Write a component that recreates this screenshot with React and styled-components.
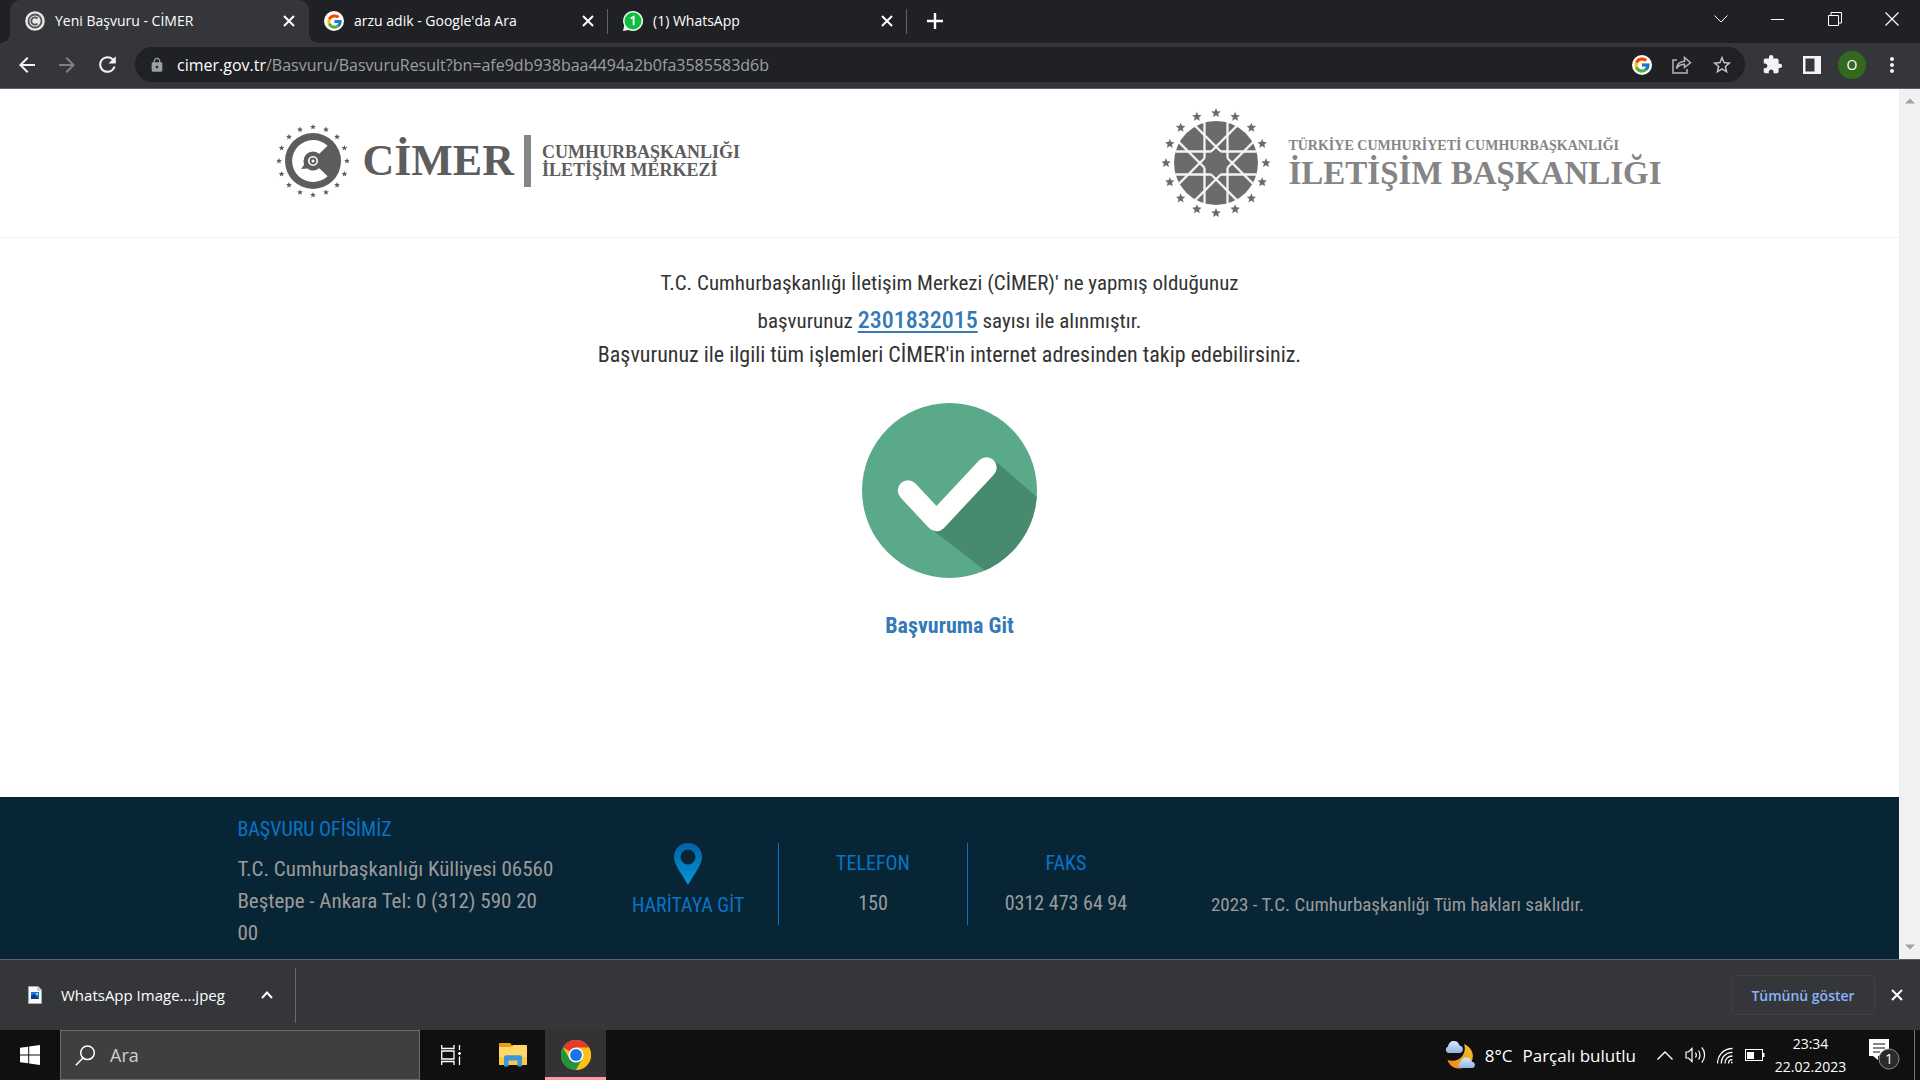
import React from 'react';
import styled, { createGlobalStyle, css } from 'styled-components';
import {
  MdArrowBack, MdArrowForward, MdRefresh, MdLock, MdStarBorder, MdExtension, MdMoreVert,
} from 'react-icons/md';
import { FcGoogle } from 'react-icons/fc';

const ui = '"Open Sans", "Noto Sans", sans-serif';
const condensed = '"Roboto Condensed", Roboto, sans-serif';
const serif = '"Liberation Serif", serif';

const GlobalStyle = createGlobalStyle`
  *, *::before, *::after { box-sizing: border-box; }
  body { margin: 0; background: #fff; font-family: ${ui}; }
  button, input { font: inherit; color: inherit; border: 0; margin: 0; padding: 0; background: none; }
  button { cursor: pointer; display: flex; align-items: center; justify-content: center; }
  a { text-decoration: none; }
  p, h2 { margin: 0; font-weight: 400; font-size: inherit; }
  svg { display: block; flex: none; }
`;

const Screen = styled.div`
  display: flex;
  flex-direction: column;
  min-height: 100vh;
`;

/* Browser chrome */
const TabStrip = styled.div`
  display: flex;
  height: 43px;
  padding-left: 10px;
  background: #202124;
  color: #fff;
`;

const Tab = styled.div`
  position: relative;
  display: flex;
  align-items: center;
  gap: 10px;
  width: 299px;
  padding: 0 10px 1px 15px;
  font-size: 14px;
  line-height: 20px;
  ${p => p.$active && css`
    background: #35363a;
    border-radius: 10px 10px 0 0;
    &::before, &::after {
      content: '';
      position: absolute;
      bottom: 0;
      width: 10px;
      height: 10px;
    }
    &::before { left: -10px; background: radial-gradient(circle at 0 0, transparent 10px, #35363a 10px); }
    &::after { right: -10px; background: radial-gradient(circle at 100% 0, transparent 10px, #35363a 10px); }
  `}
`;

const TabDivider = styled.span`
  position: absolute;
  right: 0;
  top: 9px;
  width: 1px;
  height: 25px;
  background: #5f6368;
`;

const TabTitle = styled.span`
  flex: 1;
  white-space: nowrap;
`;

const TabButton = styled.button`
  width: 20px;
  height: 20px;
`;

const NewTab = styled.button`
  width: 36px;
  height: 42px;
  margin-left: 10px;
`;

const WindowControls = styled.div`
  display: flex;
  margin-left: auto;
`;

const WindowButton = styled.button`
  width: 57px;
  height: 37px;
`;

const Toolbar = styled.div`
  display: flex;
  align-items: center;
  height: 46px;
  padding: 0 8px 2px 7px;
  background: #35363a;
  border-bottom: 1px solid #5f6064;
  color: #f1f3f4;
`;

const ToolButton = styled.button`
  width: 40px;
  height: 35px;
  color: ${p => p.$color || 'inherit'};
`;

const AddressBar = styled.div`
  display: flex;
  align-items: center;
  flex: 1;
  height: 35px;
  margin: 0 7px 0 8px;
  padding: 0 3px 0 14px;
  border-radius: 18px;
  background: #202124;
`;

const Url = styled.div`
  flex: 1;
  margin-left: 12px;
  color: #9aa0a6;
  font-size: 16px;
  line-height: 24px;
  white-space: nowrap;
  outline: 0;
`;

const Host = styled.span`
  color: #fff;
`;

const Avatar = styled.span`
  display: grid;
  place-items: center;
  width: 28px;
  height: 28px;
  border-radius: 50%;
  background: #33691e;
  color: #fff;
  font-size: 14px;
`;

const Favicon = styled.span`
  display: grid;
  place-items: center;
  width: 20px;
  height: 20px;
  border-radius: 50%;
  background: #fff;
`;

/* Page */
const Viewport = styled.div`
  display: flex;
  flex: 1;
`;

const Page = styled.div`
  display: flex;
  flex: 1;
  flex-direction: column;
  background: #fff;
  font-family: ${condensed};
`;

const Scrollbar = styled.div`
  display: flex;
  flex-direction: column;
  justify-content: space-between;
  align-items: center;
  width: 21px;
  padding: 9px 0;
  background: #f1f1f1;
`;

const Header = styled.header`
  display: flex;
  justify-content: center;
  height: 149px;
  border-bottom: 1px solid #f0f0f0;
`;

const HeaderInner = styled.div`
  display: flex;
  align-items: center;
  justify-content: space-between;
  width: 75%;
  padding-left: 40px;
`;

const Brand = styled.a`
  display: flex;
  align-items: center;
  font-family: ${serif};
  font-weight: 700;
  white-space: nowrap;
`;

const CimerBrand = styled(Brand)`
  padding-bottom: 4px;
  color: #5d5d5d;
`;

const CimerName = styled.span`
  margin: 0 10px 0 13px;
  font-size: 44px;
  line-height: 44px;
`;

const CimerBar = styled.span`
  width: 7px;
  height: 52px;
  margin-right: 11px;
  background: #858585;
`;

const CimerText = styled.span`
  font-size: 18px;
  line-height: 18px;
`;

const OfficeBrand = styled(Brand)`
  gap: 18px;
  color: #858585;
`;

const OfficeOver = styled.div`
  font-size: 14px;
  line-height: 19px;
`;

const OfficeName = styled.div`
  font-size: 33px;
  line-height: 36px;
`;

const Main = styled.main`
  display: flex;
  flex: 1;
  flex-direction: column;
  align-items: center;
  padding-top: 28px;
  color: #333;
  text-align: center;
`;

const Lead = styled.p`
  font-size: 21px;
  line-height: 34px;
`;

const Note = styled.p`
  margin-bottom: 33px;
  font-size: 22px;
  line-height: 30px;
`;

const RecordLink = styled.a`
  color: #337ab7;
  font-size: 24px;
  font-weight: 500;
  line-height: 40px;
  text-decoration: underline;
  text-decoration-thickness: 2px;
  text-underline-offset: 3px;
`;

const GoLink = styled.a`
  margin-top: 33px;
  color: #337ab7;
  font-size: 22px;
  font-weight: 700;
  line-height: 30px;
`;

const Footer = styled.footer`
  display: flex;
  justify-content: center;
  background: #082536;
  color: #9b9b9b;
  font-size: 21px;
  line-height: 32px;
`;

const FooterGrid = styled.div`
  display: grid;
  grid-template-columns: 361fr 181fr 189fr 196fr 498fr;
  width: 75%;
  padding: 16px 0 10px;
`;

const Address = styled.address`
  max-width: 322px;
  font-style: normal;
`;

const FooterTitle = styled.h2`
  margin-bottom: 8px;
  color: #0874c8;
  font-size: 20px;
`;

const FooterCell = styled.div`
  display: flex;
  flex-direction: column;
  align-items: center;
  height: 82px;
  margin-top: 30px;
  font-size: 20px;
  line-height: 40px;
  ${p => p.$line && css`border-right: 1px solid #0874c8;`}
`;

const MapLink = styled.a`
  display: flex;
  flex-direction: column;
  align-items: center;
  color: #0874c8;
`;

const CellLabel = styled.span`
  color: #0874c8;
`;

const Copyright = styled.p`
  margin-top: 72px;
  padding-left: 47px;
  font-size: 19px;
  line-height: 40px;
`;

/* Downloads */
const Downloads = styled.div`
  display: flex;
  align-items: center;
  height: 71px;
  padding: 0 13px 0 27px;
  background: #35363a;
  border-top: 1px solid #5f6064;
  color: #fff;
`;

const DownloadItem = styled.div`
  display: flex;
  align-items: center;
  width: 269px;
  height: 55px;
  border-right: 1px solid #67686c;
  font-size: 15px;
`;

const FileButton = styled.button`
  gap: 18px;
  white-space: nowrap;
`;

const MenuButton = styled.button`
  width: 28px;
  height: 28px;
  margin-left: auto;
  margin-right: 14px;
`;

const ShowAll = styled.button`
  width: 144px;
  height: 40px;
  margin: 0 12px 0 auto;
  border: 1px solid #3f4044;
  border-radius: 5px;
  color: #8ab4f8;
  font-size: 14px;
  font-weight: 600;
`;

/* Taskbar */
const Taskbar = styled.div`
  display: flex;
  height: 50px;
  background: #101010;
  color: #fff;
`;

const TaskButton = styled.button`
  width: ${p => p.$w || 61}px;
  border-bottom: ${p => (p.$open ? '3px solid #ff9aa5' : '0')};
  background: ${p => (p.$open ? '#333' : 'none')};
  padding-top: ${p => (p.$open ? 3 : 0)}px;
`;

const SearchBox = styled.label`
  display: flex;
  align-items: center;
  gap: 14px;
  width: 360px;
  padding-left: 14px;
  border: 1px solid #6b6b6b;
  background: #3f3f3f;
`;

const SearchInput = styled.input`
  width: 280px;
  font-size: 18px;
  outline: 0;
  &::placeholder { color: #d0d0d0; opacity: 1; }
`;

const Tray = styled.div`
  display: flex;
  margin-left: auto;
`;

const Weather = styled.button`
  gap: 10px;
  margin-right: 14px;
  font-size: 17px;
  white-space: nowrap;
`;

const Clock = styled.button`
  flex-direction: column;
  width: 81px;
  font-size: 14px;
  line-height: 23px;
`;

const Notices = styled(TaskButton)`
  padding-left: 4px;
`;

const ShowDesktop = styled.button`
  width: 6px;
  border-left: 1px solid #777;
`;

const star = (cx, cy, r) =>
  Array.from({ length: 10 }, (_, i) => {
    const a = (i * Math.PI) / 5 - Math.PI / 2;
    const d = i % 2 ? r * 0.45 : r;
    return `${(cx + d * Math.cos(a)).toFixed(2)},${(cy + d * Math.sin(a)).toFixed(2)}`;
  }).join(' ');

const StarRing = ({ radius, size }) =>
  Array.from({ length: 16 }, (_, i) => {
    const a = (i * Math.PI) / 8;
    return <polygon key={i} points={star(radius * Math.sin(a), -radius * Math.cos(a), size)} />;
  });

const CimerEmblem = () => (
  <svg width="72" height="76" viewBox="-36 -38 72 76" fill="#5d5d5d" aria-hidden="true">
    <StarRing radius={34} size={3} />
    <circle r="28" />
    <path d="M14.6 -15.2A21 21 0 1 0 14.6 15.2L6 7L6 -7Z" fill="#fff" />
    <path d="M-9.5 0A9.5 9.5 0 1 1 0 9.5C-2.5 9.4 -4 8.6 -5.5 7.4L-12 8L-9 4Z" />
    <circle r="4.2" fill="none" stroke="#fff" strokeWidth="1.6" />
    <circle r="1.5" fill="#fff" />
  </svg>
);

const OfficeEmblem = () => (
  <svg width="108" height="112" viewBox="-54 -56 108 112" fill="#6b6b6b" aria-hidden="true">
    <StarRing radius={50} size={5} />
    <circle r="42" />
    <g stroke="#f4f4f4" strokeWidth="2.3">
      {[0, 45, 90, 135, 180, 225, 270, 315].map(a => (
        <path key={a} transform={`rotate(${a})`} d="M-11.5 -40.6V-4.7M-11.5 4.7V40.6" />
      ))}
    </g>
  </svg>
);

const CheckBadge = () => (
  <svg width="175" height="175" viewBox="0 0 175 175" role="img" aria-label="Başarılı">
    <clipPath id="disc"><circle cx="87.5" cy="87.5" r="87.5" /></clipPath>
    <circle cx="87.5" cy="87.5" r="87.5" fill="#5aaa8a" />
    <path clipPath="url(#disc)" fill="#478a6e" d="M132 57L190 107V190H152L68 125Z" />
    <path d="M46 87.500L74.500 118L124.500 64.500" fill="none" stroke="#fff" strokeWidth="20.500" strokeLinecap="round" strokeLinejoin="round" />
  </svg>
);

const MapPin = () => (
  <svg width="28" height="42" viewBox="0 0 28 42" aria-hidden="true">
    <linearGradient id="pin" x1="0" y1="0" x2="0" y2="1">
      <stop offset="0" stopColor="#0460a4" />
      <stop offset="1" stopColor="#0499d8" />
    </linearGradient>
    <path fillRule="evenodd" fill="url(#pin)" d="M14 0C6 0 0 6 0 14C0 22 8 31 14 42C20 31 28 22 28 14C28 6 22 0 14 0ZM14 6.500A7.500 7.500 0 1 1 14 21.500A7.500 7.500 0 0 1 14 6.500Z" />
  </svg>
);

const CimerFavicon = () => (
  <svg width="20" height="20" viewBox="-10 -10 20 20" fill="none" aria-hidden="true">
    <circle r="9.800" fill="#e8e8e8" />
    <circle r="6.500" stroke="#555" strokeWidth="1.800" />
    <path d="M2.500 -2.500A3.600 3.600 0 1 0 2.500 2.500" stroke="#555" strokeWidth="1.800" />
  </svg>
);

const WhatsAppFavicon = () => (
  <svg width="20" height="20" viewBox="0 0 20 20" aria-hidden="true">
    <path d="M10 0A10 10 0 1 1 5.500 18.900L0 20L1.200 14.700A10 10 0 0 1 10 0Z" fill="#e9f7ec" />
    <circle cx="10" cy="10" r="8.500" fill="#0fbe3f" />
    <path d="M7.800 7.500L10.600 5.800V14.200" fill="none" stroke="#fff" strokeWidth="1.800" />
  </svg>
);

const Line = ({ w = 20, h = 20, d, sw = 1.5, ...rest }) => (
  <svg width={w} height={h} viewBox={`0 0 ${w} ${h}`} fill="none" stroke="currentColor" strokeWidth={sw} aria-hidden="true" {...rest}>
    <path d={d} />
  </svg>
);

const CloseIcon = () => <Line w={12} h={12} sw={2} d="M1 1L11 11M11 1L1 11" />;

const PanelIcon = () => (
  <svg width="18" height="18" viewBox="0 0 18 18" aria-hidden="true">
    <path fillRule="evenodd" fill="#f1f3f4" d="M0 0H18V18H0ZM2.500 2.500V15.500H11.500V2.500Z" />
  </svg>
);

const FileIcon = () => (
  <svg width="16" height="18" viewBox="0 0 16 18" aria-hidden="true">
    <path d="M1.500 .5H11L14.500 4V17.500H1.500Z" fill="#f8f8f8" stroke="#a9a9a9" />
    <path d="M11 .5V4H14.500" fill="#ddd" stroke="#a9a9a9" />
    <path d="M4 6H12V13H4Z" fill="#1976d2" />
    <path d="M4 10L7 8L12 13H4Z" fill="#0d3b7d" />
    <circle cx="10" cy="8" r="1" fill="#bfe6ff" />
  </svg>
);

const WindowsLogo = () => (
  <svg width="20" height="20" viewBox="0 0 20 20" fill="#fff" aria-hidden="true">
    <path d="M0 2.800L8.200 1.700V9.500H0ZM9.200 1.500L20 0V9.500H9.200ZM0 10.500H8.200V18.300L0 17.200ZM9.200 10.500H20V20L9.200 18.500Z" />
  </svg>
);

const ExplorerIcon = () => (
  <svg width="28" height="24" viewBox="0 0 28 24" aria-hidden="true">
    <path d="M0 1C0 .4.4 0 1 0H11L13.500 3V6H0Z" fill="#e3a008" />
    <path d="M0 4H12L14 2H27C27.600 2 28 2.400 28 3V22H0Z" fill="#ffd867" />
    <path d="M0 14H28V22H0Z" fill="#fbc93d" />
    <path d="M5 23.500V14C5 13 6 12.300 7 12.300H21C22 12.300 23 13 23 14V23.500H18.500V17.500H9.500V23.500Z" fill="#3a96dd" />
  </svg>
);

const ChromeIcon = () => (
  <svg width="30" height="30" viewBox="0 0 48 48" aria-hidden="true">
    <circle cx="24" cy="24" r="24" fill="#fbc116" />
    <path d="M24 24L3.200 12A24 24 0 0 1 44.800 12Z" fill="#e33b2e" />
    <path d="M3.200 12A24 24 0 0 0 24 48L34.400 30L24 24L13.600 30Z" fill="#229342" />
    <path d="M24 12H44.800A24 24 0 0 1 24 48L34.400 30Z" fill="#fbc116" />
    <circle cx="24" cy="24" r="12" fill="#fff" />
    <circle cx="24" cy="24" r="9.500" fill="#1a73e8" />
  </svg>
);

const WeatherIcon = () => (
  <svg width="30" height="28" viewBox="0 0 30 28" aria-hidden="true">
    <linearGradient id="moon" x1="1" y1="0" x2="0" y2="1">
      <stop offset="0" stopColor="#ecc62e" />
      <stop offset="1" stopColor="#f5811f" />
    </linearGradient>
    <linearGradient id="cloud" x1="0" y1="0" x2="0" y2="1">
      <stop offset="0" stopColor="#dbe9fb" />
      <stop offset="1" stopColor="#8fb2e6" />
    </linearGradient>
    <path d="M19 3C26 6 29 12 27.500 18C26 24 20 28 13.500 27.500C8 27 4 24 2.500 19C9 21 15 19 18 14C20 10 20.500 7 19 3Z" fill="url(#moon)" />
    <path d="M3 12A3.500 3.500 0 0 1 3 5.500C3.500 2 6 0 9 0C12 0 14 2 14.500 4.500C19 5 19 11.500 15 12Z" fill="url(#cloud)" />
    <path d="M15.500 27A3.200 3.200 0 0 1 15.500 21C16.500 18 18.500 16.500 21.500 16.500C24.500 16.500 26 18.500 26.500 20.500C31 21 31 26.500 27 27Z" fill="url(#cloud)" />
  </svg>
);

const BatteryIcon = () => (
  <svg width="20" height="12" viewBox="0 0 20 12" aria-hidden="true">
    <rect x=".5" y=".5" width="17" height="11" fill="none" stroke="#fff" />
    <path d="M2 3H9V10H2ZM18 4H19.500V8H18Z" fill="#fff" />
  </svg>
);

const NoticeIcon = () => (
  <svg width="32" height="32" viewBox="0 0 32 32" aria-hidden="true">
    <path d="M0 0H20V17H9L9 21L4 17H0Z" fill="#fff" />
    <path d="M4 5H16M4 9H16M4 13H11" stroke="#101010" strokeWidth="1.200" />
    <circle cx="20" cy="20" r="10" fill="#2b2b2b" stroke="#8a8a8a" />
    <text x="20" y="25" textAnchor="middle" fill="#fff" fontFamily="Open Sans, sans-serif" fontSize="14">1</text>
  </svg>
);

const tabs = [
  { title: 'Yeni Başvuru - CİMER', icon: <CimerFavicon />, active: true },
  { title: "arzu adik - Google'da Ara", icon: <Favicon><FcGoogle size={17} /></Favicon>, divider: true },
  { title: '(1) WhatsApp', icon: <WhatsAppFavicon />, divider: true },
];

export default function App() {
  return (
    <Screen>
      <GlobalStyle />
      <TabStrip>
        {tabs.map(t => (
          <Tab key={t.title} $active={t.active}>
            {t.icon}
            <TabTitle>{t.title}</TabTitle>
            <TabButton aria-label="Sekmeyi kapat"><CloseIcon /></TabButton>
            {t.divider && <TabDivider />}
          </Tab>
        ))}
        <NewTab aria-label="Yeni sekme"><Line w={16} h={16} sw={2.4} d="M8 0V16M0 8H16" /></NewTab>
        <WindowControls>
          <WindowButton aria-label="Sekme ara"><Line w={14} h={8} sw={1} d="M.5 .5L7 7L13.500 .5" /></WindowButton>
          <WindowButton aria-label="Küçült"><Line w={14} h={2} sw={1} d="M0 1.500H13" /></WindowButton>
          <WindowButton aria-label="Önceki boyut"><Line w={14} h={14} sw={1} d="M.5 3.500H10.500V13.500H.5ZM3 3V.5H13.500V11H11" /></WindowButton>
          <WindowButton aria-label="Kapat"><Line w={14} h={14} sw={1.2} d="M.5 .5L13.500 13.500M13.500 .5L.5 13.500" /></WindowButton>
        </WindowControls>
      </TabStrip>
      <Toolbar>
        <ToolButton aria-label="Geri"><MdArrowBack size={24} /></ToolButton>
        <ToolButton aria-label="İleri" $color="#7f8084"><MdArrowForward size={24} /></ToolButton>
        <ToolButton aria-label="Yenile"><MdRefresh size={25} /></ToolButton>
        <AddressBar>
          <MdLock size={16} color="#9aa0a6" />
          <Url role="textbox" tabIndex={0} aria-label="Adres">
            <Host>cimer.gov.tr</Host>/Basvuru/BasvuruResult?bn=afe9db938baa4494a2b0fa3585583d6b
          </Url>
          <ToolButton aria-label="Google"><Favicon><FcGoogle size={18} /></Favicon></ToolButton>
          <ToolButton aria-label="Paylaş" $color="#b4b6b9">
            <Line w={20} h={18} d="M5 4H1V17H15V13M4.500 12.500C5 8 8 5.500 12.500 5.200V1.500L18.500 6.800L12.500 11.500V8.300C9 8.300 6.500 9.500 4.500 12.500Z" />
          </ToolButton>
          <ToolButton aria-label="Yer işareti" $color="#c4c6c9"><MdStarBorder size={22} /></ToolButton>
        </AddressBar>
        <ToolButton aria-label="Uzantılar"><MdExtension size={21} /></ToolButton>
        <ToolButton aria-label="Yan panel"><PanelIcon /></ToolButton>
        <ToolButton aria-label="Profil"><Avatar>O</Avatar></ToolButton>
        <ToolButton aria-label="Menü"><MdMoreVert size={24} /></ToolButton>
      </Toolbar>

      <Viewport>
        <Page>
          <Header>
            <HeaderInner>
              <CimerBrand href="#cimer">
                <CimerEmblem />
                <CimerName>CİMER</CimerName>
                <CimerBar />
                <CimerText>CUMHURBAŞKANLIĞI<br />İLETİŞİM MERKEZİ</CimerText>
              </CimerBrand>
              <OfficeBrand href="#baskanlik">
                <OfficeEmblem />
                <div>
                  <OfficeOver>TÜRKİYE CUMHURİYETİ CUMHURBAŞKANLIĞI</OfficeOver>
                  <OfficeName>İLETİŞİM BAŞKANLIĞI</OfficeName>
                </div>
              </OfficeBrand>
            </HeaderInner>
          </Header>
          <Main>
            <Lead>T.C. Cumhurbaşkanlığı İletişim Merkezi (CİMER)' ne yapmış olduğunuz</Lead>
            <Lead>başvurunuz <RecordLink href="#basvuru">2301832015</RecordLink> sayısı ile alınmıştır.</Lead>
            <Note>Başvurunuz ile ilgili tüm işlemleri CİMER'in internet adresinden takip edebilirsiniz.</Note>
            <CheckBadge />
            <GoLink href="#basvuru">Başvuruma Git</GoLink>
          </Main>
          <Footer>
            <FooterGrid>
              <Address>
                <FooterTitle>BAŞVURU OFİSİMİZ</FooterTitle>
                T.C. Cumhurbaşkanlığı Külliyesi 06560 Beştepe - Ankara Tel: 0 (312) 590 20 00
              </Address>
              <FooterCell $line>
                <MapLink href="#harita"><MapPin />HARİTAYA GİT</MapLink>
              </FooterCell>
              <FooterCell $line><CellLabel>TELEFON</CellLabel><span>150</span></FooterCell>
              <FooterCell><CellLabel>FAKS</CellLabel><span>0312 473 64 94</span></FooterCell>
              <Copyright>2023 - T.C. Cumhurbaşkanlığı Tüm hakları saklıdır.</Copyright>
            </FooterGrid>
          </Footer>
        </Page>
        <Scrollbar aria-hidden="true">
          <svg width="10" height="6" viewBox="0 0 10 6"><path d="M0 5.500L5 .5L10 5.500Z" fill="#a3a3a3" /></svg>
          <svg width="10" height="6" viewBox="0 0 10 6"><path d="M0 .5L5 5.500L10 .5Z" fill="#a3a3a3" /></svg>
        </Scrollbar>
      </Viewport>

      <Downloads>
        <DownloadItem>
          <FileButton><FileIcon />WhatsApp Image....jpeg</FileButton>
          <MenuButton aria-label="İndirme seçenekleri"><Line w={12} h={8} sw={2} d="M1 7L6 1.500L11 7" /></MenuButton>
        </DownloadItem>
        <ShowAll>Tümünü göster</ShowAll>
        <TabButton aria-label="Kapat"><CloseIcon /></TabButton>
      </Downloads>

      <Taskbar>
        <TaskButton $w={60} aria-label="Başlat"><WindowsLogo /></TaskButton>
        <SearchBox>
          <Line w={21} h={21} d="M8 13L.8 20.200M12.500 1A6.800 6.800 0 1 1 12.500 14.600A6.800 6.800 0 0 1 12.500 1Z" />
          <SearchInput placeholder="Ara" aria-label="Ara" />
        </SearchBox>
        <TaskButton aria-label="Görev görünümü">
          <Line w={20} h={20} sw={1.3} d="M.7 0V3.500H13V0M.7 6H13V14H.7ZM.7 20V16.500H13V20M18.500 0V5M18.500 7V10M18.500 11.500V20M17 8.500H20" />
        </TaskButton>
        <TaskButton $w={64} aria-label="Dosya Gezgini"><ExplorerIcon /></TaskButton>
        <TaskButton $open aria-label="Google Chrome"><ChromeIcon /></TaskButton>
        <Tray>
          <Weather><WeatherIcon /><span>8°C</span><span>Parçalı bulutlu</span></Weather>
          <TaskButton $w={30} aria-label="Gizli simgeler"><Line w={16} h={9} sw={1.4} d="M.5 8.500L8 1L15.500 8.500" /></TaskButton>
          <TaskButton $w={30} aria-label="Ses">
            <Line w={21} h={18} sw={1.2} d="M1 6H3.500L7 2.500V15.500L3.500 12H1ZM10.500 6.500C11.500 8 11.500 10 10.500 11.500M13.500 4.500C15.500 7 15.500 11 13.500 13.500M16.800 1.500C20.500 5.500 20.500 12.500 16.800 16.500" />
          </TaskButton>
          <TaskButton $w={30} aria-label="Ağ">
            <Line w={16} h={17} sw={1.3} d="M.5 16.500C.5 8 7 1.500 15.500 1.500M4.300 16.500C4.300 10 9 5.300 15.500 5.300M8 16.500C8 12 11 9 15.500 9M11.500 16.500C11.500 14 13 12.700 15.500 12.700M14 15.500H15.500" />
          </TaskButton>
          <TaskButton $w={30} aria-label="Pil"><BatteryIcon /></TaskButton>
          <Clock><span>23:34</span><span>22.02.2023</span></Clock>
          <Notices $w={63} aria-label="Bildirimler"><NoticeIcon /></Notices>
          <ShowDesktop aria-label="Masaüstünü göster" />
        </Tray>
      </Taskbar>
    </Screen>
  );
}
